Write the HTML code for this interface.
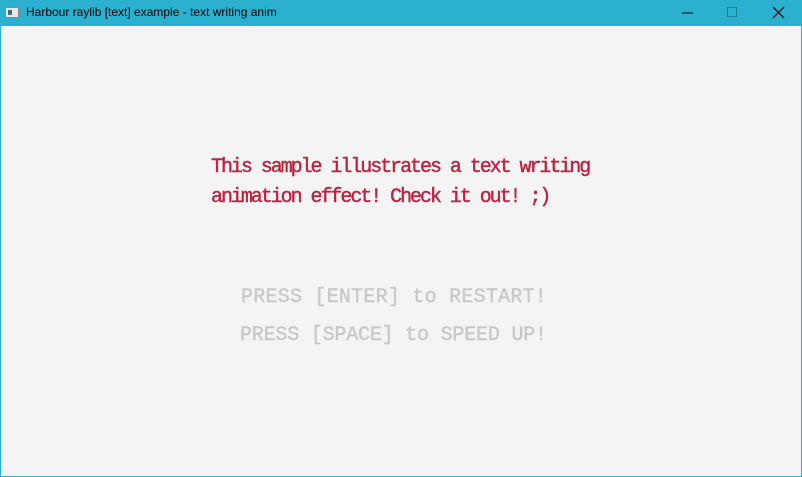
<!DOCTYPE html>
<html><head><meta charset="utf-8"><style>
html,body{margin:0;padding:0;width:802px;height:477px;overflow:hidden;background:#2bb0cf;}
#title{position:absolute;left:0;top:0;width:802px;height:26px;background:#2bb0cf;}
#title .t{position:absolute;left:26px;top:5px;font:12px "Liberation Sans",sans-serif;color:#000;}
#icon{position:absolute;left:5px;top:7px;width:14px;height:11px;background:#e8e8e8;border:1px solid #888;box-sizing:border-box;}
#icon:before{content:"";position:absolute;left:2px;top:2px;width:4px;height:5px;background:#4a6a7a;}
#client{position:absolute;left:1px;top:26px;width:800px;height:450px;background:#f4f4f4;}
.red{position:absolute;left:210px;font:20px "Liberation Mono",monospace;letter-spacing:-2.05px;color:#be213f;white-space:pre;-webkit-text-stroke:0.4px #be213f;}
.gray{position:absolute;font:20px "Liberation Mono",monospace;color:#c8c8c8;white-space:pre;-webkit-text-stroke:0.4px #c8c8c8;}
</style></head><body>
<div id="title"><div id="icon"></div><div class="t">Harbour raylib [text] example - text writing anim</div>
<svg style="position:absolute;left:680px;top:6px" width="110" height="14">
<line x1="2" y1="7" x2="13" y2="7" stroke="#000" stroke-width="1"/>
<rect x="47.5" y="1.5" width="9" height="9" fill="none" stroke="#1a7e96" stroke-width="1"/>
<line x1="93" y1="1" x2="104" y2="12" stroke="#000" stroke-width="1.2"/>
<line x1="104" y1="1" x2="93" y2="12" stroke="#000" stroke-width="1.2"/>
</svg></div>
<div id="client">
<div class="red" style="top:130px">This sample illustrates a text writing</div>
<div class="red" style="top:160px">animation effect! Check it out! ;)</div>
<div class="gray" style="left:240px;top:260px;letter-spacing:0.24px">PRESS [ENTER] to RESTART!</div>
<div class="gray" style="left:239px;top:298px;letter-spacing:-0.2px">PRESS [SPACE] to SPEED UP!</div>
</div>
</body></html>
